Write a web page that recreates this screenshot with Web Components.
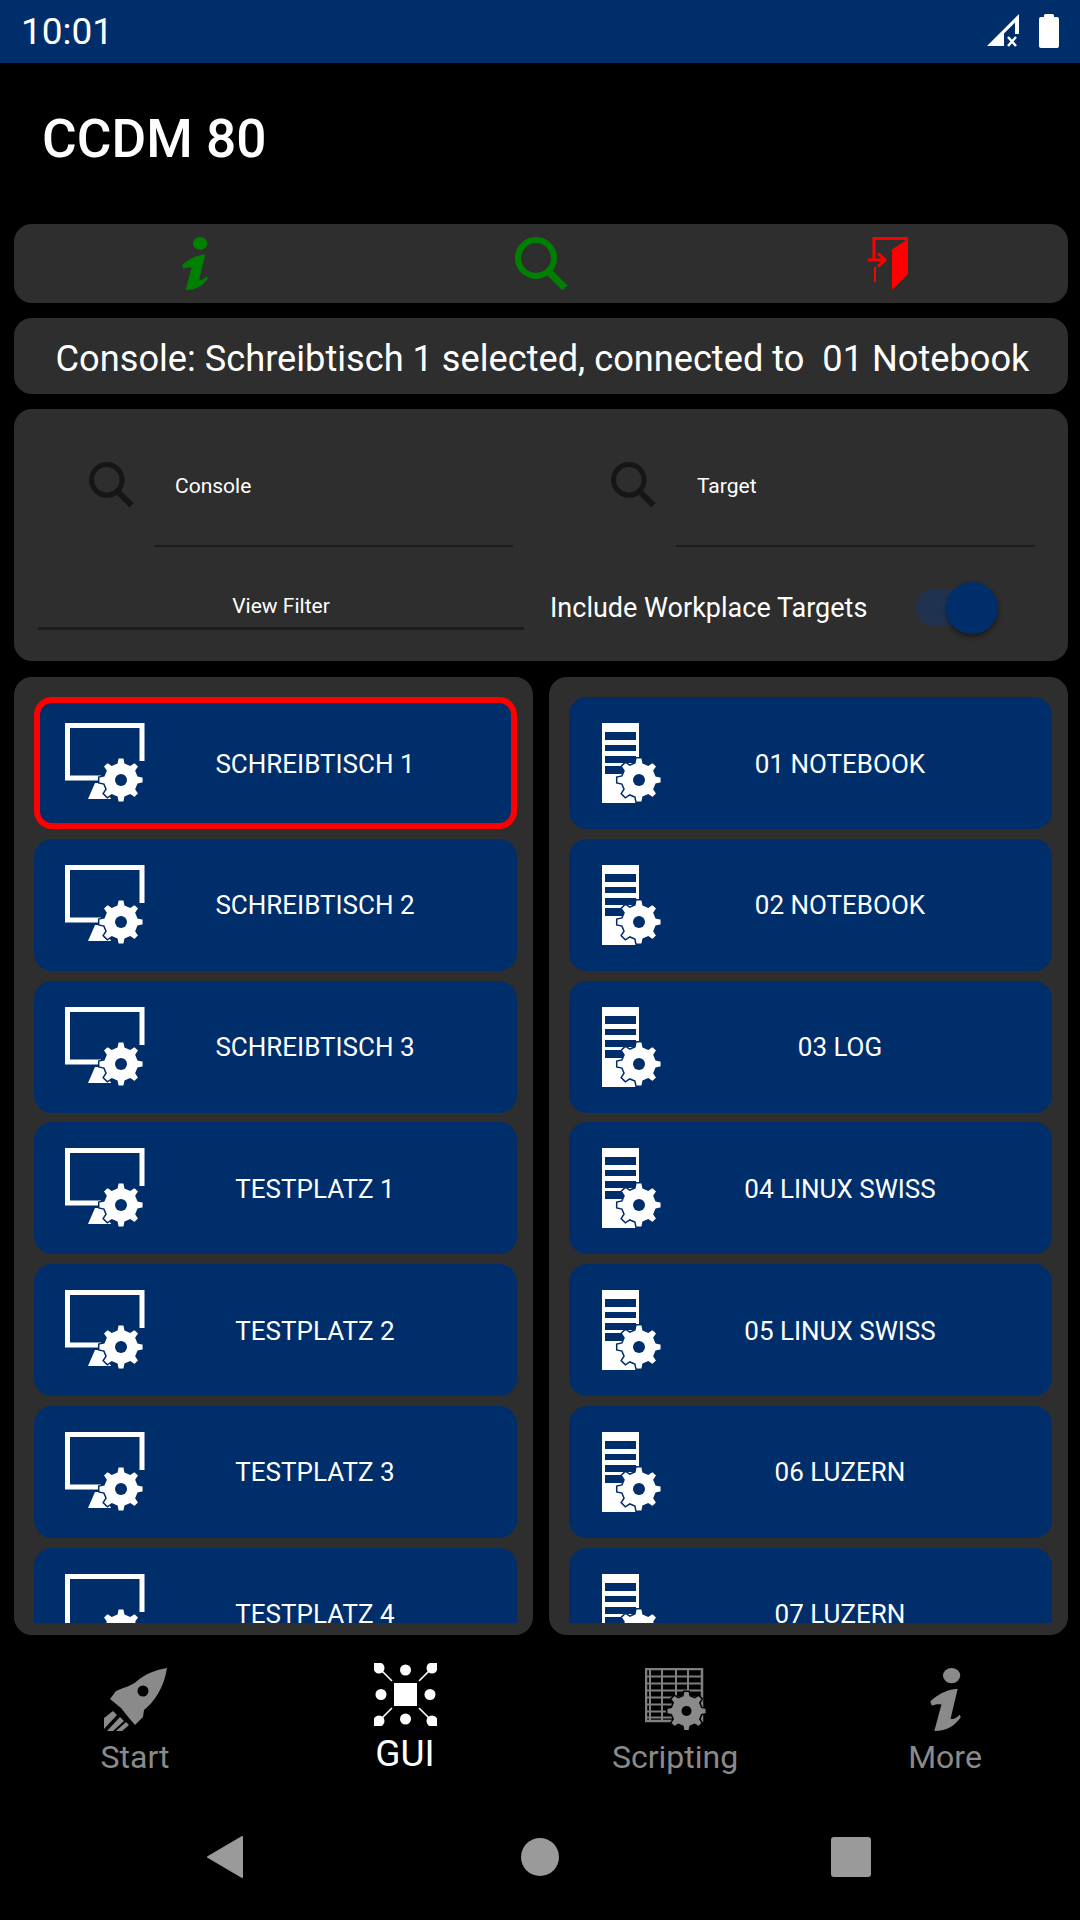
<!DOCTYPE html>
<html><head><meta charset="utf-8"><title>CCDM 80</title>
<style>
html,body{margin:0;padding:0;background:#000}
body{font-family:Roboto,"Liberation Sans",sans-serif;color:#fff}
</style></head><body>
<ccdm-app></ccdm-app>
<script>
const NAVY='#002e6b';const PANEL='#2e2e2e';
function gear(cx,cy,R,r,n){let d='';const s=Math.PI*2/n;for(let i=0;i<n;i++){const a=i*s-Math.PI/2;
 const p=[[-.30,r],[-.17,R],[.17,R],[.30,r]];
 p.forEach((q,j)=>{const t=a+q[0]*s*1.0;const x=cx+q[1]*Math.cos(t),y=cy+q[1]*Math.sin(t);d+=(i==0&&j==0?'M':'L')+x.toFixed(2)+' '+y.toFixed(2)});
 }return d+'Z'}
function gearSvg(cx,cy,R,fill,bg,hole){return `<path d="${gear(cx,cy,R,R*.78,8)}" fill="${fill}" stroke="${bg}" stroke-width="1.5"/><circle cx="${cx}" cy="${cy}" r="${hole}" fill="${bg}"/>`}
const I={
 info:`<svg viewBox="0 0 30 62" width="WW" height="HH" fill="currentColor"><ellipse cx="21" cy="7.5" rx="8.500" ry="7.5"/><path d="M0 33C6 27 16 21 27 20.5L20 50C23 51 26 49 29 46L30 48.5C25 56 17 62 4 62L11 36C8 35 4 36 1.5 37Z"/></svg>`,
 search:`<svg viewBox="0 0 53 53" width="WW" height="HH" fill="none" stroke="currentColor"><circle cx="21" cy="21" r="18" stroke-width="6"/><path d="M33 34L50 51" stroke-width="7"/></svg>`,
 door:`<svg viewBox="0 0 40 53" width="40" height="53"><path d="M6 23V1.500H39V36" fill="none" stroke="#f00" stroke-width="3"/><path d="M7 30V45" fill="none" stroke="#f00" stroke-width="2"/><path d="M24 12.500L40 2V37L24 53Z" fill="#f00"/><path d="M0 23H15M10 16.500L17 23L10 29.500" fill="none" stroke="#f00" stroke-width="3"/></svg>`,
 monitor:`<svg viewBox="0 0 80 80" width="80" height="80"><path d="M36 55H2.500V2.500H77V38" fill="none" stroke="#fff" stroke-width="5"/><path d="M23 76L30 60H38L46 76Z" fill="#fff"/>${gearSvg(56,57,22.500,'#fff',NAVY,6)}</svg>`,
 server:`<svg viewBox="0 0 60 80" width="60" height="80"><path d="M0 0H37V80H0Z" fill="#fff"/><path d="M3 9H34V17H3ZM3 22H34V28H3ZM3 33H34V40H3ZM3 43H34V51H3Z" fill="${NAVY}"/>${gearSvg(37,57,22.500,'#fff',NAVY,6)}</svg>`,
 rocket:`<svg viewBox="0 0 63 63" width="63" height="63" fill="currentColor"><path d="M63 0C50 2 40 7 33 13C28 18 20 19 12 23L6 31L17 40L25 50L31 57L39 49L40 42C50 34 60 20 63 0ZM39 17.500A5.500 5.500 0 1 0 39 28.500A5.500 5.500 0 0 0 39 17.500Z" fill-rule="evenodd"/><path d="M0 50L9 43L13 47L0 61ZM3 63L16 49L20 53L9 63ZM12 63L22 54L25 57L18 63Z"/></svg>`,
 gui:`<svg viewBox="0 0 63 63" width="63" height="63" fill="#fff" stroke="none"><rect x="20" y="20" width="23" height="23"/><g><circle cx="5" cy="5" r="5.500"/><circle cx="58" cy="5" r="5.500"/><circle cx="5" cy="58" r="5.500"/><circle cx="58" cy="58" r="5.500"/><path d="M0 0H5V5H0ZM58 0H63V5H58ZM0 58H5V63H0ZM58 58H63V63H58Z"/><circle cx="31.500" cy="7" r="5.500"/><circle cx="31.500" cy="56" r="5.500"/><circle cx="7" cy="31.500" r="5.500"/><circle cx="56" cy="31.500" r="5.500"/></g><path d="M7 7L18 18M56 7L45 18M7 56L18 45M56 56L45 45" stroke="#fff" stroke-width="1.600"/></svg>`,
 script:`<svg viewBox="0 0 61 63" width="61" height="63"><g fill="none" stroke="#7f7f7f"><rect x="1" y="1" width="56" height="52" stroke-width="2.500"/><path d="M1 8.500H57M1 15.500H57M1 22.500H57M1 29.500H57M1 36.500H57M1 43.500H57M1 49.500H57M5 1V53M17 1V53M31 1V53M43 1V53" stroke-width="2"/></g>${gearSvg(41.500,43,20,'#8a8a8a','#000',5)}</svg>`
};
function sized(s,w,h){return s.replace('WW',w).replace('HH',h)}
function def(name,css,html){customElements.define(name,class extends HTMLElement{
 constructor(){super();const r=this.attachShadow({mode:'open'});r.innerHTML=`<style>${css}</style>${typeof html==='function'?html(this):html}`;}
})}
def('status-bar',`:host{display:flex;align-items:center;justify-content:space-between;height:63px;background:${NAVY};color:#fff;padding:0 21px 0 21px;box-sizing:border-box;font-size:37px}
 svg{display:block}.r{display:flex;align-items:flex-start;gap:20px;height:34px;margin-top:-1px}`,
 `<span>10:01</span><div class="r"><svg width="32" height="33" viewBox="0 0 32 33"><path d="M0 32L32 0V20H28V8.500L17 19.500V32Z" fill="#fff"/><path d="M21 23L29 32M29 23L21 32" stroke="#fff" stroke-width="2.500"/></svg><svg width="20" height="34" viewBox="0 0 20 34"><path d="M5 3V1.500Q5 0 6.500 0H13.500Q15 0 15 1.500V3H18Q20 3 20 5V32Q20 34 18 34H2Q0 34 0 32V5Q0 3 2 3Z" fill="#fff"/></svg></div>`);
def('app-title',`:host{display:flex;align-items:center;height:161px;padding:0 0 10px 42px;font-size:53.2px;font-weight:500;color:#fff;box-sizing:border-box}`,`<slot></slot>`);
def('tool-bar',`:host{display:flex;justify-content:space-between;align-items:center;height:79px;padding:0 154px 0 154px;box-sizing:border-box;background:${PANEL};border-radius:18px;margin:0 12px 0 14px}
 .g{color:#008000;display:flex;justify-content:center;width:53px}svg{display:block}`,
 `<div class="g">${sized(I.info,26,53)}</div><div class="g">${sized(I.search,53,53)}</div><div class="g">${I.door}</div>`);
def('selection-line',`:host{display:flex;align-items:center;justify-content:center;height:76px;background:${PANEL};border-radius:18px;margin:15px 12px 0 14px;padding:4px 0 0 3px;box-sizing:border-box;font-size:36.2px;white-space:pre;color:#fff}`,`<slot></slot>`);
def('search-field',`:host{display:flex;align-items:flex-start;color:#161616}svg{display:block;flex:none}
 .f{margin-left:20px;width:359px;height:85px;border-bottom:2px solid #1c1c1c;font-size:21px;line-height:48px;color:#fff;padding-left:21px;box-sizing:border-box}`,
 e=>`${sized(I.search,45,45)}<div class="f">${e.getAttribute('label')}</div>`);
def('view-filter',`:host{display:block;width:486px;height:45px;border-bottom:3px solid #1c1c1c;font-size:21px;line-height:48px;text-align:center;color:#fff}`,`<slot></slot>`);
def('toggle-switch',`:host{display:block;position:relative;width:82px;height:51px;flex:none}
 .t{position:absolute;left:0;top:7px;width:60px;height:37px;border-radius:19px;background:#1f3350}
 .k{position:absolute;right:0;top:0;width:52px;height:52px;border-radius:50%;background:${NAVY};box-shadow:0 3px 5px rgba(0,0,0,.45)}`,`<div class="t"></div><div class="k"></div>`);
def('filter-panel',`:host{display:block;height:252px;background:${PANEL};border-radius:18px;margin:15px 12px 0 14px;padding:53px 0 0 0;box-sizing:border-box}
 .a{display:flex;gap:98px;padding-left:75px}.b{display:flex;align-items:flex-start;margin-top:35px;padding-left:24px}
 .l{margin-left:26px;margin-right:47px;font-size:27px;line-height:52px;white-space:nowrap;width:319px}`,
 `<div class="a"><search-field label="Console"></search-field><search-field label="Target"></search-field></div>
 <div class="b"><view-filter>View Filter</view-filter><div class="l">Include Workplace Targets</div><toggle-switch></toggle-switch></div>`);
def('device-button',`:host{display:flex;align-items:center;flex:none;height:132px;background:${NAVY};border-radius:18px;box-sizing:border-box;padding-left:var(--pl);color:#fff;font-size:26px}
 :host([selected]){border:6px solid #f00;padding-left:calc(var(--pl) - 6px)}
 svg{display:block;flex:none}span{flex:1;text-align:center;padding:1px var(--pr) 0 0;white-space:nowrap}
 :host([selected]) span{padding-right:calc(var(--pr) - 6px)}`,
 e=>`${e.getAttribute('kind')==='server'?I.server:I.monitor}<span><slot></slot></span>`);
def('device-list',`:host{display:block;width:519px;height:958px;background:${PANEL};border-radius:18px;box-sizing:border-box;padding:20px 16px 0 20px;flex:none}
 .s{height:926px;overflow:hidden;display:flex;flex-direction:column;gap:9.8px}`,`<div class="s"><slot></slot></div>`);
def('list-row',`:host{display:flex;gap:16px;margin:16px 12px 0 14px}`,`<slot></slot>`);
def('nav-item',`:host{display:flex;flex-direction:column;align-items:center;width:270px;padding-top:33px;box-sizing:border-box;color:#8a8a8a;font-size:32px}
 :host([active]){color:#fff;padding-top:28px;font-size:37px}svg{display:block}.i{height:63px;display:flex}
 .t{line-height:36px;margin-top:8px}:host([active]) .t{margin-top:10px}`,e=>{const k=e.getAttribute('icon');const s=k==='info'?sized(I.info,31,63):I[k];return `<div class="i">${s}</div><div class="t"><slot></slot></div>`});
def('bottom-nav',`:host{display:flex;height:165px}`,`<slot></slot>`);
def('system-nav',`:host{display:grid;grid-template-columns:450px 180px 442px;height:120px;align-items:center;padding-bottom:6px;box-sizing:border-box}
 div{display:flex;justify-content:center}svg{display:block}`,
 `<div><svg width="36" height="42" viewBox="0 0 36 42"><path d="M35 1V41L1 21Z" fill="#9a9a9a" stroke="#9a9a9a" stroke-width="2" stroke-linejoin="round"/></svg></div><div><svg width="38" height="38" viewBox="0 0 38 38"><circle cx="19" cy="19" r="19" fill="#9a9a9a"/></svg></div><div><svg width="40" height="40" viewBox="0 0 40 40"><rect width="40" height="40" rx="3" fill="#9a9a9a"/></svg></div>`);
const L=['SCHREIBTISCH 1','SCHREIBTISCH 2','SCHREIBTISCH 3','TESTPLATZ 1','TESTPLATZ 2','TESTPLATZ 3','TESTPLATZ 4'];
const R=['01 NOTEBOOK','02 NOTEBOOK','03 LOG','04 LINUX SWISS','05 LINUX SWISS','06 LUZERN','07 LUZERN'];
def('ccdm-app',`:host{display:block;width:1080px;height:1920px;overflow:hidden;background:#000}`,
 `<status-bar></status-bar><app-title>CCDM 80</app-title><tool-bar></tool-bar>
 <selection-line>Console: Schreibtisch 1 selected, connected to  01 Notebook</selection-line>
 <filter-panel></filter-panel>
 <list-row><device-list style="--pl:31px;--pr:32px">${L.map((t,i)=>`<device-button kind="monitor" ${i==0?'selected':''}>${t}</device-button>`).join('')}</device-list>
 <device-list style="--pl:33px;--pr:34px">${R.map(t=>`<device-button kind="server">${t}</device-button>`).join('')}</device-list></list-row>
 <bottom-nav><nav-item icon="rocket">Start</nav-item><nav-item icon="gui" active>GUI</nav-item><nav-item icon="script">Scripting</nav-item><nav-item icon="info">More</nav-item></bottom-nav>
 <system-nav></system-nav>`);
</script></body></html>
